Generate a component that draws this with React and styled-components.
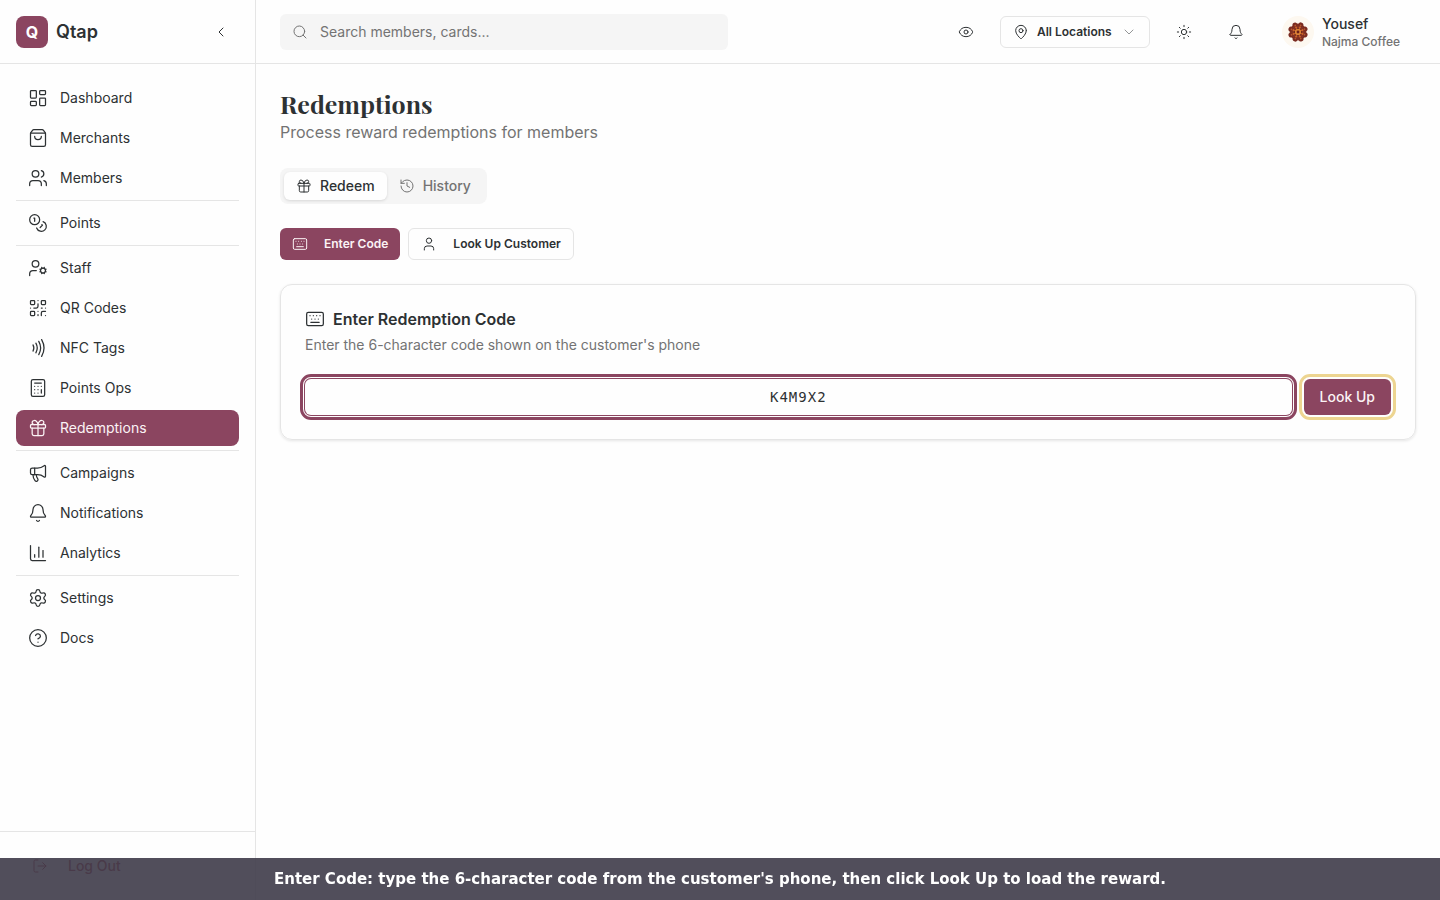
import React from 'react'
import styled, { createGlobalStyle } from 'styled-components'
import {
  Bell, Calculator, ChartColumn, ChevronDown, ChevronLeft, CircleQuestionMark, Eye, Gift, History,
  Keyboard, LayoutDashboard, LogOut, MapPin, Megaphone, Nfc, QrCode, Search, Settings, ShoppingBag,
  Sun, User, UserCog, Users
} from 'lucide-react'

const GlobalStyle = createGlobalStyle`
    * {
        box-sizing: border-box;
    }

    body {
        margin: 0;
        background-color: #FEFEFE;
        color: #2D3133;
        font-family: Inter, sans-serif;
        font-size: 14px;
        line-height: 20px;
    }

    button, input, select {
        font: inherit;
        color: inherit;
    }

    button {
        cursor: pointer;
    }
`

const Page = styled.div`
    display: flex;
    min-height: 100vh;
`

const Sidebar = styled.aside`
    position: sticky;
    top: 0;
    flex: none;
    width: 256px;
    height: 100vh;
    display: flex;
    flex-direction: column;
    border-right: 1px solid #E5E5E5;
`

const Brand = styled.div`
    height: 64px;
    flex: none;
    display: flex;
    align-items: center;
    gap: 8px;
    padding: 0 16px;
    border-bottom: 1px solid #E5E5E5;
`

const LogoMark = styled.span`
    width: 32px;
    height: 32px;
    display: flex;
    align-items: center;
    justify-content: center;
    border-radius: 8px;
    background-color: #8B4560;
    color: #FFF;
    font-size: 16px;
    font-weight: 700;
`

const BrandName = styled.span`
    flex: 1;
    font-size: 18px;
    line-height: 28px;
    font-weight: 600;
`

const IconButton = styled.button`
    width: 36px;
    height: 36px;
    flex: none;
    display: flex;
    align-items: center;
    justify-content: center;
    padding: 0;
    border: none;
    border-radius: 6px;
    background: none;
`

const Nav = styled.nav`
    flex: 1;
    padding: 16px;
    overflow: hidden;
`

const NavGroup = styled.div`
    display: flex;
    flex-direction: column;
    gap: 4px;

    & + & {
        margin-top: 4px;
        padding-top: 4px;
        border-top: 1px solid #E5E5E5;
    }
`

const NavLink = styled.a`
    height: 36px;
    display: flex;
    align-items: center;
    gap: 12px;
    padding: 0 12px;
    border-radius: 8px;
    background-color: ${props => props.$active ? '#8B4560' : 'transparent'};
    color: ${props => props.$active ? '#FBF3F5' : '#2D3133'};
    text-decoration: none;
`

const SidebarFooter = styled.div`
    flex: none;
    padding: 16px;
    border-top: 1px solid #E5E5E5;
`

const LogOutButton = styled.button`
    width: 100%;
    height: 36px;
    display: flex;
    align-items: center;
    gap: 20px;
    padding: 0 16px;
    border: none;
    background: none;
    color: #A32638;
    font-weight: 500;
`

const Content = styled.div`
    flex: 1;
    min-width: 0;
`

const TopBar = styled.header`
    height: 64px;
    display: flex;
    align-items: center;
    justify-content: space-between;
    gap: 16px;
    padding: 0 24px;
    border-bottom: 1px solid #E5E5E5;
`

const SearchBox = styled.label`
    width: 448px;
    height: 36px;
    display: flex;
    align-items: center;
    gap: 12px;
    padding: 0 12px;
    border-radius: 6px;
    background-color: #F5F5F5;
    color: #737373;
`

const SearchInput = styled.input`
    flex: 1;
    min-width: 0;
    padding: 0;
    border: none;
    outline: none;
    background: none;

    &::placeholder {
        color: #737373;
        opacity: 1;
    }
`

const TopActions = styled.div`
    display: flex;
    align-items: center;
    gap: 16px;
`

const LocationButton = styled.button`
    width: 150px;
    height: 32px;
    display: flex;
    align-items: center;
    gap: 8px;
    padding: 0 12px;
    border: 1px solid #E5E5E5;
    border-radius: 6px;
    background-color: #FEFEFE;
    font-size: 12px;
    font-weight: 600;
    white-space: nowrap;

    svg:last-child {
        margin-left: auto;
        opacity: 0.5;
    }
`

const Account = styled.button`
    display: flex;
    align-items: center;
    gap: 8px;
    padding: 0 16px 0 12px;
    border: none;
    background: none;
    text-align: left;
`

const AccountName = styled.span`
    display: block;
    font-size: 14px;
    line-height: 20px;
    font-weight: 500;
`

const AccountShop = styled.span`
    display: block;
    color: #737373;
    font-size: 12px;
    line-height: 16px;
    font-weight: 500;
`

const Main = styled.main`
    padding: 24px;
`

const PageTitle = styled.h1`
    margin: 0;
    font-family: "Playfair Display", "Liberation Serif", serif;
    font-size: 25px;
    line-height: 32px;
    font-weight: 700;
`

const PageSubtitle = styled.p`
    margin: 0;
    color: #737373;
    font-size: 16px;
    line-height: 24px;
`

const Tabs = styled.div`
    display: inline-flex;
    margin-top: 24px;
    padding: 4px;
    border-radius: 8px;
    background-color: #F5F5F5;
`

const Tab = styled.button`
    height: 28px;
    display: flex;
    align-items: center;
    gap: 8px;
    padding: 0 12px;
    border: none;
    border-radius: 6px;
    background-color: ${props => props.$active ? '#FEFEFE' : 'transparent'};
    box-shadow: ${props => props.$active ? '0 1px 3px #0000001F' : 'none'};
    color: ${props => props.$active ? '#2D3133' : '#737373'};
    font-weight: 500;
`

const ModeRow = styled.div`
    display: flex;
    gap: 8px;
    margin: 24px 0;
`

const ModeButton = styled.button`
    height: 32px;
    display: flex;
    align-items: center;
    gap: 16px;
    padding: 0 12px;
    border: ${props => props.$primary ? 'none' : '1px solid #E5E5E5'};
    border-radius: 6px;
    background-color: ${props => props.$primary ? '#8B4560' : '#FEFEFE'};
    color: ${props => props.$primary ? '#FBF3F5' : '#2D3133'};
    font-size: 12px;
    font-weight: 600;
`

const Card = styled.section`
    padding: 24px;
    border: 1px solid #E5E5E5;
    border-radius: 12px;
    box-shadow: 0 1px 3px #0000001A;
`

const CardTitle = styled.h2`
    display: flex;
    align-items: center;
    gap: 8px;
    margin: 0;
    font-size: 16px;
    line-height: 20px;
    font-weight: 600;
`

const CardText = styled.p`
    margin: 6px 0 0;
    color: #737373;
`

const CodeForm = styled.form`
    display: flex;
    gap: 12px;
    margin-top: 24px;
`

const CodeInput = styled.input`
    flex: 1;
    min-width: 0;
    height: 36px;
    padding: 0 12px;
    border: none;
    border-radius: 6px;
    outline: 3px solid #8B4560;
    outline-offset: 2px;
    box-shadow: 0 0 0 1px #8B4560;
    background-color: #FEFEFE;
    font-family: "DejaVu Sans Mono", monospace;
    font-size: 14px;
    letter-spacing: 1px;
    text-align: center;
`

const SubmitButton = styled.button`
    height: 36px;
    padding: 0 16px;
    border: none;
    border-radius: 6px;
    outline: 3px solid #EDD591;
    outline-offset: 2px;
    background-color: #8B4560;
    color: #FBF3F5;
    font-weight: 500;
`

const Caption = styled.div`
    position: fixed;
    left: 0;
    right: 0;
    bottom: 0;
    padding: 10px 24px;
    background-color: #403D4BE8;
    color: #FFF;
    font-family: "DejaVu Sans", sans-serif;
    font-size: 15px;
    line-height: 22px;
    font-weight: 700;
    text-align: center;
`

function Coins({ size, strokeWidth }) {
  return (
    <svg width={size} height={size} viewBox="0 0 24 24" fill="none" stroke="currentColor" strokeWidth={strokeWidth} strokeLinecap="round" strokeLinejoin="round" aria-hidden="true">
        <circle cx="8" cy="8" r="6" />
        <path d="M18.09 10.37A6 6 0 1 1 10.34 18" />
        <path d="M7 6h1v4" />
        <path d="m16.71 13.88.7.71-2.82 2.82" />
    </svg>
  )
}

function Avatar() {
  const angles = [0, 45, 90, 135, 180, 225, 270, 315]
  return (
    <svg width="32" height="32" viewBox="0 0 32 32" aria-hidden="true">
        <circle cx="16" cy="16" r="16" fill="#FDF8F0" />
        <circle cx="16" cy="16" r="8.4" fill="#8A3524" />
        {angles.map(a => (
          <g key={a} transform={`rotate(${a + 22} 16 16)`}>
              <circle cx="16" cy="8.4" r="2.5" fill="#7A2B20" />
              <circle cx="16" cy="9" r="0.9" fill="#B9582F" />
              <circle cx="16" cy="11.4" r="1.2" fill="#C9622B" />
          </g>
        ))}
        {angles.map(a => (
          <circle key={a} cx="16" cy="12.4" r="0.9" fill="#5E1C18" transform={`rotate(${a} 16 16)`} />
        ))}
        <circle cx="16" cy="16" r="3.2" fill="#DB8235" />
        <circle cx="16" cy="16" r="1.4" fill="#6B1F1A" />
    </svg>
  )
}

const navGroups = [
  [
    { label: 'Dashboard', icon: LayoutDashboard },
    { label: 'Merchants', icon: ShoppingBag },
    { label: 'Members', icon: Users },
  ],
  [
    { label: 'Points', icon: Coins },
  ],
  [
    { label: 'Staff', icon: UserCog },
    { label: 'QR Codes', icon: QrCode },
    { label: 'NFC Tags', icon: Nfc },
    { label: 'Points Ops', icon: Calculator },
    { label: 'Redemptions', icon: Gift, active: true },
  ],
  [
    { label: 'Campaigns', icon: Megaphone },
    { label: 'Notifications', icon: Bell },
    { label: 'Analytics', icon: ChartColumn },
  ],
  [
    { label: 'Settings', icon: Settings },
    { label: 'Docs', icon: CircleQuestionMark },
  ],
]

function App() {
  return (
    <Page>
        <GlobalStyle />
        <Sidebar>
            <Brand>
                <LogoMark>Q</LogoMark>
                <BrandName>Qtap</BrandName>
                <IconButton aria-label="Collapse sidebar"><ChevronLeft size={16} strokeWidth={1.5} /></IconButton>
            </Brand>
            <Nav>
                {navGroups.map((group, i) => (
                  <NavGroup key={i}>
                      {group.map(({ label, icon: Icon, active }) => (
                        <NavLink key={label} href="#" $active={active} aria-current={active ? 'page' : undefined}>
                            <Icon size={20} strokeWidth={1.5} />
                            {label}
                        </NavLink>
                      ))}
                  </NavGroup>
                ))}
            </Nav>
            <SidebarFooter>
                <LogOutButton><LogOut size={16} strokeWidth={1.5} />Log Out</LogOutButton>
            </SidebarFooter>
        </Sidebar>
        <Content>
            <TopBar>
                <SearchBox>
                    <Search size={16} strokeWidth={1.5} />
                    <SearchInput type="search" aria-label="Search" placeholder="Search members, cards..." />
                </SearchBox>
                <TopActions>
                    <IconButton aria-label="Preview"><Eye size={16} strokeWidth={1.5} /></IconButton>
                    <LocationButton>
                        <MapPin size={16} strokeWidth={1.5} />
                        All Locations
                        <ChevronDown size={16} strokeWidth={1.5} />
                    </LocationButton>
                    <IconButton aria-label="Theme"><Sun size={16} strokeWidth={1.5} /></IconButton>
                    <IconButton aria-label="Alerts"><Bell size={16} strokeWidth={1.5} /></IconButton>
                    <Account>
                        <Avatar />
                        <span>
                            <AccountName>Yousef</AccountName>
                            <AccountShop>Najma Coffee</AccountShop>
                        </span>
                    </Account>
                </TopActions>
            </TopBar>
            <Main>
                <PageTitle>Redemptions</PageTitle>
                <PageSubtitle>Process reward redemptions for members</PageSubtitle>
                <Tabs role="tablist">
                    <Tab role="tab" aria-selected="true" $active><Gift size={16} strokeWidth={1.5} />Redeem</Tab>
                    <Tab role="tab" aria-selected="false"><History size={16} strokeWidth={1.5} />History</Tab>
                </Tabs>
                <ModeRow>
                    <ModeButton $primary><Keyboard size={16} strokeWidth={1.5} />Enter Code</ModeButton>
                    <ModeButton><User size={16} strokeWidth={1.5} />Look Up Customer</ModeButton>
                </ModeRow>
                <Card>
                    <CardTitle><Keyboard size={20} strokeWidth={1.5} />Enter Redemption Code</CardTitle>
                    <CardText id="code-help">Enter the 6-character code shown on the customer's phone</CardText>
                    <CodeForm onSubmit={e => e.preventDefault()}>
                        <CodeInput aria-label="Redemption code" aria-describedby="code-help" defaultValue="K4M9X2" maxLength={6} />
                        <SubmitButton type="submit">Look Up</SubmitButton>
                    </CodeForm>
                </Card>
            </Main>
        </Content>
        <Caption>Enter Code: type the 6-character code from the customer's phone, then click Look Up to load the reward.</Caption>
    </Page>
  )
}

export default App
